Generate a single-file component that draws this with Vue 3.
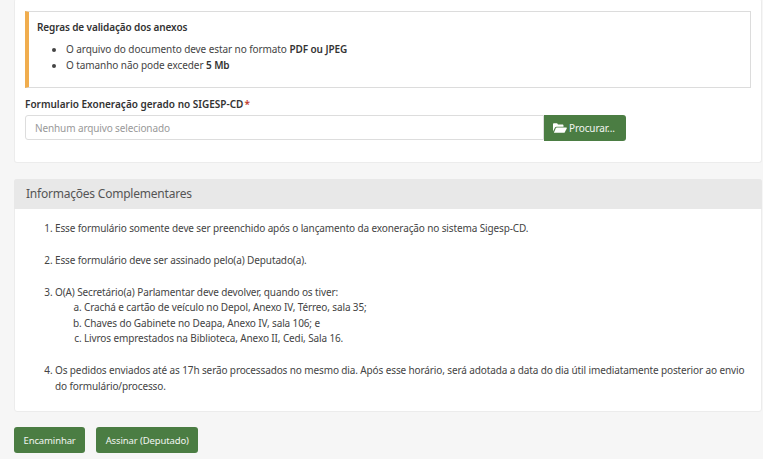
<script setup>
const rules = [
  { text: 'O arquivo do documento deve estar no formato ', strong: 'PDF ou JPEG' },
  { text: 'O tamanho não pode exceder ', strong: '5 Mb' }
]
</script>

<template>
  <div class="page">
    <section class="card upload">
      <div class="alert">
        <h4>Regras de validação dos anexos</h4>
        <ul>
          <li v-for="rule in rules" :key="rule.strong">{{ rule.text }}<strong>{{ rule.strong }}</strong></li>
        </ul>
      </div>
      <label class="field-label">Formulario Exoneração gerado no SIGESP-CD<span class="req">*</span></label>
      <div class="file-row">
        <div class="file-input">Nenhum arquivo selecionado</div>
        <button class="btn btn-file">
          <svg class="folder" viewBox="0 0 16 13" width="14" height="12">
            <path d="M0 2.2C0 1.4.6 1 1.2 1h3c.6 0 1 .3 1.2 1l.2.4h5.2c.7 0 1.2.5 1.2 1.2V5H4.2C3.2 5 2.5 5.5 2.1 6.3L0 10.5z" fill="#fff" />
            <path d="M3.3 6.4c.2-.4.6-.6 1-.6h10.6c.7 0 1.1.6.8 1.2l-2.2 4.4c-.2.4-.6.6-1 .6H1z" fill="#fff" />
          </svg>
          Procurar...
        </button>
      </div>
    </section>

    <section class="card info">
      <header class="info-head">Informações Complementares</header>
      <ol class="info-list">
        <li>Esse formulário somente deve ser preenchido após o lançamento da exoneração no sistema Sigesp-CD.</li>
        <li>Esse formulário deve ser assinado pelo(a) Deputado(a).</li>
        <li class="with-sub">
          O(A) Secretário(a) Parlamentar deve devolver, quando os tiver:
          <ol class="sub-list">
            <li>Crachá e cartão de veículo no Depol, Anexo IV, Térreo, sala 35;</li>
            <li>Chaves do Gabinete no Deapa, Anexo IV, sala 106; e</li>
            <li>Livros emprestados na Biblioteca, Anexo II, Cedi, Sala 16.</li>
          </ol>
        </li>
        <li>Os pedidos enviados até as 17h serão processados no mesmo dia. Após esse horário, será adotada a data do dia útil imediatamente posterior ao envio do formulário/processo.</li>
      </ol>
    </section>

    <div class="actions">
      <button class="btn">Encaminhar</button>
      <button class="btn">Assinar (Deputado)</button>
    </div>
  </div>
</template>

<style>
html, body { margin: 0; background: #f6f6f6; }
</style>

<style scoped>
.page {
  width: 763px;
  height: 459px;
  box-sizing: border-box;
  padding: 0 1px 0 14px;
  overflow: hidden;
  background: #f6f6f6;
  color: #444;
  font-family: "Noto Sans", "Open Sans", sans-serif;
  font-size: 10px;
  line-height: 16px;
  letter-spacing: -0.12px;
}
.card {
  background: #fff;
  border: 1px solid #ececec;
  border-radius: 3px;
  box-sizing: border-box;
}
.upload {
  height: 164px;
  margin-top: -1px;
  padding: 12px 10px 0;
  border-top: none;
}
.alert {
  height: 77px;
  box-sizing: border-box;
  border: 1px solid #dcdcdc;
  border-left: 4px solid #f0ad4e;
  padding: 7px 8px;
}
.alert h4 {
  margin: 0 0 6px;
  font-size: 10px;
  line-height: 16px;
  font-weight: 600;
  color: #333;
}
.alert ul {
  margin: 0;
  padding: 0 0 0 29px;
  letter-spacing: -0.08px;
}
.alert strong,
.field-label {
  font-weight: 600;
  color: #333;
}
.field-label {
  display: block;
  margin-top: 8px;
  height: 19px;
  line-height: 16px;
  letter-spacing: 0;
}
.req { color: #c0392b; margin-left: 1px; }
.file-row { display: flex; }
.file-input {
  width: 519px;
  height: 25px;
  box-sizing: border-box;
  border: 1px solid #ddd;
  border-radius: 3px 0 0 3px;
  padding: 0 9px;
  line-height: 24px;
  color: #999;
}
.btn {
  height: 26px;
  padding: 0 9.5px;
  border: none;
  border-radius: 3px;
  background: #4b7d43;
  color: #f2f5f1;
  font-family: inherit;
  font-size: 9.5px;
  letter-spacing: -0.12px;
}
.btn-file {
  display: flex;
  align-items: center;
  gap: 2px;
  width: 82px;
  padding: 0 9px;
  border-radius: 0 3px 3px 0;
  font-size: 10px;
}
.info {
  height: 233px;
  margin-top: 16px;
}
.info-head {
  height: 30px;
  margin: -1px -1px 0;
  padding-left: 12px;
  background: #e8e8e8;
  border-radius: 3px 3px 0 0;
  font-size: 12px;
  line-height: 30px;
  letter-spacing: -0.22px;
  color: #555;
}
.info-list {
  margin: 0;
  padding: 11px 0 0 40px;
  width: 695px;
}
.info-list > li { margin-bottom: 16px; }
.info-list > li.with-sub { margin-bottom: 15px; }
.sub-list {
  margin: 0;
  padding: 0 0 0 29px;
  list-style: lower-alpha;
  line-height: 15.5px;
}
.actions {
  display: flex;
  gap: 11px;
  margin-top: 15px;
}
</style>
